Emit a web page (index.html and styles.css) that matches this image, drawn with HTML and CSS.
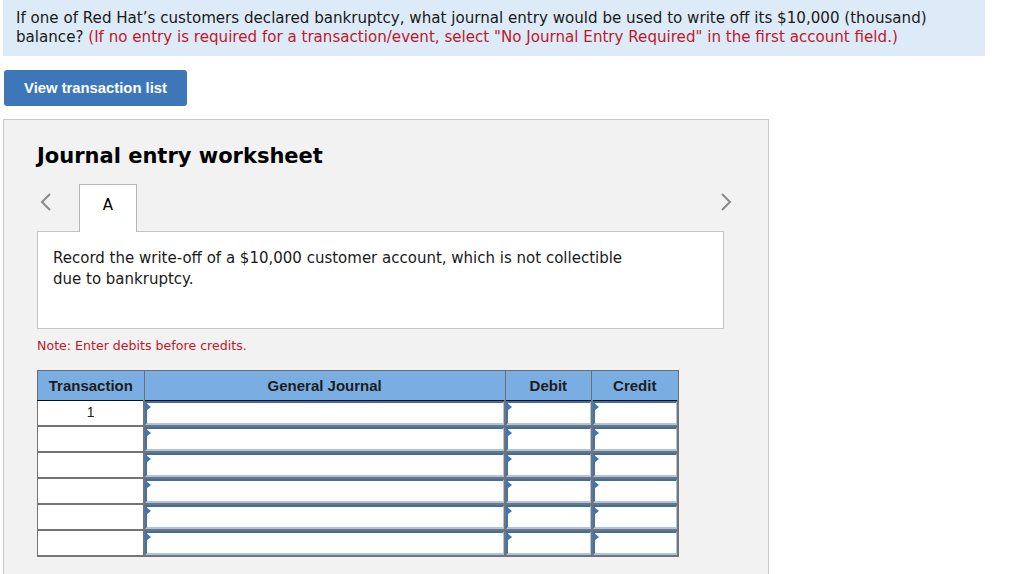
FILE: index.html
```html
<!DOCTYPE html>
<html>
<head>
<meta charset="utf-8">
<link rel="stylesheet" href="styles.css">
</head>
<body>
<div class="page">
  <div class="question">
    <span>If one of Red Hat’s customers declared bankruptcy, what journal entry would be used to write off its $10,000 (thousand)</span> <span>balance?</span> <span class="red">(If no entry is required for a transaction/event, select "No Journal Entry Required" in the first account field.)</span>
  </div>
  <button class="btn">View transaction list</button>
  <div class="panel">
    <h2 class="title">Journal entry worksheet</h2>
    <div class="tabs">
      <span class="chev left"><svg width="12" height="20" viewBox="0 0 12 20"><path d="M10 2 L2 10 L10 18" fill="none" stroke="#8a8a8a" stroke-width="2"/></svg></span>
      <div class="tab">A</div>
      <div class="spacer"></div>
      <span class="chev right"><svg width="12" height="20" viewBox="0 0 12 20"><path d="M2 2 L10 10 L2 18" fill="none" stroke="#8a8a8a" stroke-width="2"/></svg></span>
    </div>
    <div class="desc">Record the write-off of a $10,000 customer account, which is not collectible<br>due to bankruptcy.</div>
    <div class="note">Note: Enter debits before credits.</div>
    <table class="journal">
      <thead>
        <tr><th class="c1">Transaction</th><th class="c2">General Journal</th><th class="c3">Debit</th><th class="c4">Credit</th></tr>
      </thead>
      <tbody>
        <tr><td class="num">1</td><td><div class="field"></div></td><td><div class="field"></div></td><td><div class="field"></div></td></tr>
        <tr><td class="num"></td><td><div class="field"></div></td><td><div class="field"></div></td><td><div class="field"></div></td></tr>
        <tr><td class="num"></td><td><div class="field"></div></td><td><div class="field"></div></td><td><div class="field"></div></td></tr>
        <tr><td class="num"></td><td><div class="field"></div></td><td><div class="field"></div></td><td><div class="field"></div></td></tr>
        <tr><td class="num"></td><td><div class="field"></div></td><td><div class="field"></div></td><td><div class="field"></div></td></tr>
        <tr><td class="num"></td><td><div class="field"></div></td><td><div class="field"></div></td><td><div class="field"></div></td></tr>
      </tbody>
    </table>
  </div>
</div>
</body>
</html>
```
FILE: styles.css
```css
html, body {
  margin: 0;
  padding: 0;
  background: #ffffff;
}
.page {
  padding-left: 3px;
  width: 982px;
  font-family: "DejaVu Sans", Verdana, sans-serif;
  color: #1a1a1a;
}
.question {
  background: #dcebf7;
  font-size: 15.1px;
  line-height: 19px;
  padding: 9px 12px 9px 13px;
  height: 38px;
}
.red {
  color: #c0172c;
}
.btn {
  display: block;
  margin: 14px 0 0 1px;
  width: 183px;
  height: 36px;
  background: #3d77ba;
  color: #ffffff;
  border: none;
  border-radius: 3px;
  font-family: "Liberation Sans", Arial, sans-serif;
  font-weight: bold;
  font-size: 14.8px;
  padding: 0;
  text-align: center;
}
.panel {
  margin-top: 13px;
  width: 766px;
  height: 460px;
  background: #f2f2f2;
  border: 1px solid #c9c9c9;
  padding: 0 0 0 33px;
  box-sizing: border-box;
}
.title {
  margin: 24px 0 0 0;
  font-size: 21px;
  line-height: 25px;
  font-weight: bold;
  color: #000;
}
.tabs {
  display: flex;
  align-items: flex-end;
  width: 695px;
  margin-top: 14px;
  height: 48px;
}
.chev {
  display: flex;
  align-self: flex-start;
  margin-top: 9px;
}
.chev.left {
  margin-left: 3px;
  width: 39px;
}
.tab {
  width: 58px;
  height: 48px;
  background: #fff;
  border: 1px solid #b5b5b5;
  border-bottom: none;
  font-size: 15px;
  text-align: center;
  line-height: 40px;
  color: #000;
  position: relative;
  top: 1px;
  box-sizing: border-box;
}
.spacer {
  flex: 1;
}
.desc {
  width: 687px;
  height: 98px;
  box-sizing: border-box;
  background: #fff;
  border: 1px solid #c3c3c3;
  padding: 16px 15px 0 15px;
  font-size: 15px;
  line-height: 21px;
  color: #1a1a1a;
}
.note {
  color: #c0172c;
  font-size: 12.6px;
  margin-top: 9px;
  line-height: 16px;
}
.journal {
  margin-top: 16px;
  border-collapse: collapse;
  width: 642px;
  font-family: "Liberation Sans", Arial, sans-serif;
}
.journal th {
  background: #7aade2;
  border: 1px solid #6c6c6c;
  border-bottom: 1px solid #111;
  height: 29px;
  font-size: 15px;
  font-weight: bold;
  color: #1d1d1d;
  padding: 0;
}
.journal th + th {
  border-left: 1px solid #111;
}
.c1 { width: 106px; }
.c2 { width: 364px; }
.c3 { width: 86px; }
.c4 { width: 86px; }
.journal td {
  border: 2px solid #747474;
  border-top-width: 1px;
  padding: 0;
  background: #fff;
  vertical-align: top;
}
.journal tr:first-child td {
  border-top: none;
}
.journal td.num {
  text-align: center;
  font-size: 14px;
  line-height: 22px;
  color: #222;
  border-left: 1px solid #747474;
}
.field {
  position: relative;
  height: 24px;
  box-sizing: border-box;
  border-top: 2px solid #3d6ea9;
  border-left: 2px solid #4572aa;
  border-bottom: 2px solid #a9c6e8;
  border-right: 1px solid #a9c6e8;
  background: #fff;
}
.field::before {
  content: "";
  position: absolute;
  left: -1px;
  top: 0;
  border-left: 5px solid #3d77ba;
  border-top: 4px solid transparent;
  border-bottom: 4px solid transparent;
}
```
